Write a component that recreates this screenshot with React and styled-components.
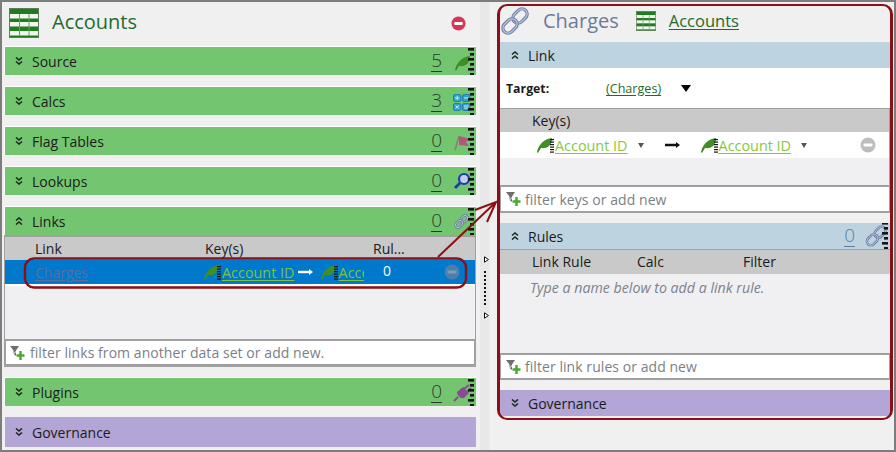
import React from "react";
import styled, { createGlobalStyle } from "styled-components";

const GlobalStyle = createGlobalStyle`
  html, body {
    margin: 0;
    padding: 0;
    width: 896px;
    height: 452px;
    overflow: hidden;
    background: #f0f0f0;
  }
  * {
    box-sizing: border-box;
  }
`;

const Frame = styled.div`
  position: relative;
  width: 896px;
  height: 452px;
  display: flex;
  background: #f0f0f0;
  border: 2px solid #7d7d7d;
  font-family: "Open Sans", "Noto Sans", sans-serif;
  font-size: 14px;
  color: #1b1b1b;
  overflow: hidden;
`;

const LeftPane = styled.div`
  width: 474px;
  flex: none;
  padding-left: 2px;
  display: flex;
  flex-direction: column;
`;

const LeftHeader = styled.div`
  height: 44px;
  display: flex;
  align-items: center;
  padding: 0 10px 2px 5px;
`;

const Title = styled.div`
  margin-left: 13px;
  padding-bottom: 4px;
  font-size: 20px;
  color: #1f6b2c;
  flex: 1;
`;

const Band = styled.div`
  height: ${(p) => p.$height || 26}px;
  flex: none;
  margin-bottom: ${(p) => p.$gap ?? 0}px;
  margin-left: ${(p) => (p.$inset ? 1 : 0)}px;
  display: flex;
  align-items: center;
  background: ${(p) => p.$color};
  border-top: ${(p) => (p.$line ? "1px solid #fff" : "none")};
  border-left: ${(p) => (p.$line ? "1px solid #fff" : "none")};
  padding-left: ${(p) => p.$pad || 10}px;
`;

const BandLabel = styled.span`
  margin-left: 9px;
  padding-top: 1px;
  flex: 1;
`;

const Count = styled.span`
  font-size: 19px;
  font-weight: 300;
  line-height: 21px;
  color: ${(p) => p.$color || "#2f3a2f"};
  border-bottom: 1px solid ${(p) => p.$color || "#2f3a2f"};
  margin-right: ${(p) => p.$right ?? 10}px;
`;

const IconSlot = styled.span`
  display: flex;
  flex: none;
  margin-left: ${(p) => p.$left || 0}px;
  margin-right: ${(p) => p.$right || 0}px;
`;

const Table = styled.div`
  height: 132px;
  margin-bottom: 10px;
  display: flex;
  flex-direction: column;
  border: 1px solid #a0a0a0;
  border-top: 2px solid #a0a0a0;
  background: #f0f0f3;
`;

const GridHead = styled.div`
  height: ${(p) => p.$height || 23}px;
  flex: none;
  display: grid;
  grid-template-columns: ${(p) => p.$cols};
  align-items: center;
  background: #c9c9c9;
  border-top: ${(p) => (p.$line ? "1px solid #a0a0a0" : "none")};
  padding-bottom: ${(p) => (p.$line ? 2 : 0)}px;
`;

const HeadCell = styled.span`
  padding-left: ${(p) => p.$pad || 0}px;
`;

const SelectedRow = styled.div`
  height: 26px;
  flex: none;
  display: grid;
  grid-template-columns: 199px 169px 62px 1fr;
  align-items: center;
  background: #0078cc;
  border-bottom: 2px solid #fff;
`;

const RowLink = styled.span`
  padding: 1px 0 0 30px;
  color: #5f6c9e;
  text-decoration: underline;
  text-underline-offset: 2px;
`;

const KeyCell = styled.span`
  width: 160px;
  display: flex;
  align-items: center;
  overflow: hidden;
  white-space: nowrap;

  svg {
    flex: none;
  }
`;

const FieldLink = styled.span`
  flex: none;
  font-size: 14.4px;
  color: ${(p) => p.$color || "#86c83f"};
  text-decoration: underline;
  text-underline-offset: 2px;
  margin-left: 1px;
`;

const Spacer = styled.div`
  flex: 1;
`;

const Gap = styled.span`
  flex: none;
  display: block;
  width: ${(p) => p.$w || 0}px;
  height: ${(p) => p.$h || 0}px;
`;

const RuleCount = styled.span`
  color: #fff;
  padding-left: 10px;
  margin-top: -3px;
`;

const FilterBox = styled.div`
  height: ${(p) => p.$height || 27}px;
  flex: none;
  display: flex;
  align-items: center;
  gap: ${(p) => p.$gap || 5}px;
  padding-left: ${(p) => p.$pad || 4}px;
  background: #fff;
  border: 1px solid #a0a0a0;
  border-top-width: 2px;
  border-bottom-width: 2px;
  color: #7b7f85;
  letter-spacing: 0.06px;
`;

const Splitter = styled.div`
  width: 21px;
  flex: none;
  display: flex;
  justify-content: flex-end;
  background: linear-gradient(90deg, #f0f0f0 0 4px, #e8e8e8 4px 13px, #f0f0f0 14px);
`;

const Handle = styled.div`
  width: 5px;
  height: 63px;
  margin: 254px 8px 0 0;
  display: flex;
  flex-direction: column;
  align-items: flex-start;
  justify-content: space-between;
`;

const Dots = styled.div`
  width: 2px;
  height: 34px;
  background: repeating-linear-gradient(#111 0 2px, transparent 2px 4px);
`;

const RightPane = styled.div`
  width: 396px;
  height: 416px;
  flex: none;
  margin-top: 2px;
  display: flex;
  flex-direction: column;
  border: 3px solid #8b0f16;
  border-top-width: 2px;
  border-bottom-width: 2px;
  border-radius: 10px;
  overflow: hidden;
`;

const RightHeader = styled.div`
  height: 36px;
  flex: none;
  display: flex;
  align-items: center;
  padding-bottom: 7px;
`;

const RightTitle = styled.span`
  font-size: 20px;
  color: #6c7a9c;
  margin: 0 17px 0 13px;
`;

const RightLink = styled.span`
  font-size: 16.5px;
  color: #1f6b2c;
  text-decoration: underline;
  text-underline-offset: 2px;
  margin-left: 13px;
`;

const WhiteBody = styled.div`
  background: #fff;
  height: 117px;
  flex: none;
  display: flex;
  flex-direction: column;
`;

const TargetRow = styled.div`
  height: 40px;
  flex: none;
  display: flex;
  align-items: center;
  font-size: 12.3px;
  padding-left: 6px;
`;

const TargetLabel = styled.b`
  width: 100px;
`;

const TargetLink = styled.span`
  font-size: 12.6px;
  color: #1f6b2c;
  text-decoration: underline;
  text-underline-offset: 2px;
`;

const BigCaret = styled.span`
  width: 0;
  height: 0;
  margin-left: 20px;
  border-left: 5px solid transparent;
  border-right: 5px solid transparent;
  border-top: 7px solid #000;
`;

const SubTable = styled.div`
  flex: 1;
  display: flex;
  flex-direction: column;
  background: #f0f0f3;
  border-top: 1px solid #a0a0a0;
  border-right: 1px solid #a0a0a0;
`;

const KeyRow = styled.div`
  height: 26px;
  flex: none;
  display: flex;
  align-items: center;
  padding-left: 37px;
  background: #fff;
`;

const SmallCaret = styled.span`
  width: 0;
  height: 0;
  margin-left: 10px;
  border-left: 3.5px solid transparent;
  border-right: 3.5px solid transparent;
  border-top: 5px solid #555;
`;

const RulesBody = styled.div`
  height: 79px;
  flex: none;
  background: #f0f0f3;
`;

const Hint = styled.div`
  padding: 4px 0 0 30px;
  font-size: 14.2px;
  font-style: italic;
  color: #7d8288;
`;

const Overlay = styled.svg`
  position: absolute;
  left: -2px;
  top: -2px;
  pointer-events: none;
`;

const Chevrons = ({ up }) => (
  <svg width="8" height="8" viewBox="0 0 8 8">
    <path
      d={up ? "M1 3.5l3-2.5 3 2.5M1 7.5l3-2.5 3 2.5" : "M1 .5l3 2.5 3-2.5M1 4.5l3 2.5 3-2.5"}
      fill="none"
      stroke="#1c2b1c"
      strokeWidth="1.6"
    />
  </svg>
);

const TableIcon = ({ size }) => (
  <svg width={size} height={size} viewBox="0 0 30 30">
    <rect x="0.5" y="0.5" width="29" height="29" fill="#1f7d1f" stroke="#5d7b5d" />
    {[6, 14, 23].map((y) => (
      <rect key={y} x="1" y={y} width="28" height="4.5" fill="#f2f6ee" />
    ))}
    <path d="M10.5 6v22M20 6v22" stroke="#6f9a6a" strokeWidth="1" />
  </svg>
);

const Ruler = ({ x = 16 }) => (
  <g fill="#151515">
    {[1, 6, 11, 16, 21, 26].map((y, i) => (
      <rect key={y} x={x + (i % 2 ? 2 : 0)} y={y} width={i % 2 ? 4 : 6} height="2.6" />
    ))}
  </g>
);

const LeafShape = () => (
  <path d="M0 14C2 5 8 1 15 0c0 7-4 11-11 10l-3 5z" fill="#3f8f26" />
);

const LeafField = () => (
  <svg width="17" height="15" viewBox="0 0 17 15">
    <LeafShape />
    <g fill="#151515">
      {[1, 3.5, 6, 8.5, 11, 13.5].map((y) => (
        <rect key={y} x="13" y={y} width="4" height="1.2" />
      ))}
    </g>
  </svg>
);

const ChainShape = ({ width = 3.6 }) => (
  <g fill="none" transform="rotate(-45 16 16)">
    <rect x="15" y="10.5" width="17" height="11" rx="5.5" stroke="#6d7fa8" strokeWidth={width} />
    <rect x="15" y="10.5" width="17" height="11" rx="5.5" stroke="#c3cde0" strokeWidth={width / 3} />
    <rect x="0" y="10.5" width="17" height="11" rx="5.5" stroke="#6d7fa8" strokeWidth={width} />
    <rect x="0" y="10.5" width="17" height="11" rx="5.5" stroke="#c3cde0" strokeWidth={width / 3} />
  </g>
);

const Chain = ({ size }) => (
  <svg width={size} height={size} viewBox="0 0 32 32">
    <ChainShape />
  </svg>
);

const RulerChain = () => (
  <svg width="26" height="26" viewBox="0 0 26 26">
    <g transform="scale(0.72) translate(1 2)">
      <ChainShape />
    </g>
    <g transform="translate(2 -2)">
      <Ruler x={16} />
    </g>
  </svg>
);

const CalcCell = ({ x, y, glyph }) => (
  <g>
    <rect x={x} y={y} width="7.4" height="7" rx="1.6" fill="#2ea6c8" stroke="#1c7fb0" />
    <path d={glyph} transform={`translate(${x} ${y})`} stroke="#cfeaf2" strokeWidth="1" fill="none" />
  </g>
);

const BandIcon = ({ kind }) => (
  <svg width="24" height="28" viewBox="0 0 24 28">
    {kind === "leaf" && (
      <g transform="translate(3 9)">
        <LeafShape />
      </g>
    )}
    {kind === "calc" && (
      <g>
        <CalcCell x={1.5} y={7.5} glyph="M1.5 3.5h4.4M3.7 1.3v4.4" />
        <CalcCell x={10.5} y={7.5} glyph="M1.5 3.5h4.4" />
        <CalcCell x={1.5} y={16.5} glyph="M2 2l3.4 3M5.4 2L2 5" />
        <CalcCell x={10.5} y={16.5} glyph="M1.5 2.5h4.4M1.5 4.5h4.4" />
      </g>
    )}
    {kind === "flag" && (
      <g>
        <path d="M7 9l11 3-4 3 3 4-10-1z" fill="#b3557c" />
        <path d="M7 9L3 23" stroke="#8d7a7a" strokeWidth="1.5" />
      </g>
    )}
    {kind === "search" && (
      <g fill="none" stroke="#1c3fa8">
        <circle cx="12" cy="12" r="5" fill="#c8c8f4" strokeWidth="2.2" />
        <path d="M8 16l-5 5" strokeWidth="3" />
      </g>
    )}
    {kind === "link" && (
      <g transform="translate(2 7) scale(0.47)">
        <ChainShape width={5} />
      </g>
    )}
    {kind === "plug" && (
      <g fill="#8a4a96">
        <path d="M5 14l6-5 6 6-5 5c-3 1-7-2-7-6z" />
        <path d="M6 19l-4 4M12 11l5-4M15 14l4-4" stroke="#8a4a96" strokeWidth="2" />
      </g>
    )}
    <Ruler />
  </svg>
);

const Remove = ({ fill = "#d13a55", dash = "#fff", size = 16 }) => (
  <svg width={size} height={size} viewBox="0 0 16 16">
    <circle cx="8" cy="8" r="7.5" fill={fill} />
    <rect x="3.5" y="6.5" width="9" height="3" rx="1" fill={dash} />
  </svg>
);

const Arrow = ({ color }) => (
  <svg width="15" height="8" viewBox="0 0 15 8">
    <path d="M0 4h12" stroke={color} strokeWidth="2.4" />
    <path d="M11 1l4 3-4 3z" fill={color} />
  </svg>
);

const FilterIcon = () => (
  <svg width="15" height="14" viewBox="0 0 15 14">
    <path d="M0 0h9L6 4.5V10L3.5 8V4.5z" fill="#6e6e6e" />
    <path d="M1 11L10 1" stroke="#fff" strokeWidth="1" />
    <path d="M10.5 5v9M6.5 9.5h8" stroke="#4aa82e" strokeWidth="2.4" />
  </svg>
);

const Triangle = () => (
  <svg width="5" height="7" viewBox="0 0 5 7">
    <path d="M.5.8l4 2.7-4 2.7z" fill="#fff" stroke="#111" />
  </svg>
);

const GREEN = "#73c66f";
const PURPLE = "#b3a5d5";
const BLUE = "#bdd3df";
const RED = "#8b0f16";

const sections = [
  { label: "Source", count: 5, icon: "leaf" },
  { label: "Calcs", count: 3, icon: "calc" },
  { label: "Flag Tables", count: 0, icon: "flag" },
  { label: "Lookups", count: 0, icon: "search" },
];

const Section = ({ label, count, icon, up, gap = 11 }) => (
  <Band $color={GREEN} $line $height={29} $gap={gap}>
    <Chevrons up={up} />
    <BandLabel>{label}</BandLabel>
    <Count>{count}</Count>
    <IconSlot>
      <BandIcon kind={icon} />
    </IconSlot>
  </Band>
);

const App = () => {
  return (
    <Frame>
      <GlobalStyle />
      <LeftPane>
        <LeftHeader>
          <TableIcon size={30} />
          <Title>Accounts</Title>
          <Remove size={15} />
        </LeftHeader>
        {sections.map((s) => (
          <Section key={s.label} {...s} />
        ))}
        <Section label="Links" count={0} icon="link" up gap={0} />
        <Table>
          <GridHead $cols="200px 168px 1fr">
            <HeadCell $pad={30}>Link</HeadCell>
            <HeadCell>Key(s)</HeadCell>
            <HeadCell>Rul...</HeadCell>
          </GridHead>
          <SelectedRow>
            <RowLink>Charges</RowLink>
            <KeyCell>
              <LeafField />
              <FieldLink $color="#7cc43a">Account ID</FieldLink>
              <Gap $w={3} />
              <Arrow color="#fff" />
              <Gap $w={8} />
              <LeafField />
              <FieldLink $color="#7cc43a">Account ID</FieldLink>
            </KeyCell>
            <RuleCount>0</RuleCount>
            <IconSlot $left={9}>
              <Remove fill="#4f7fa8" dash="#7b9dbb" />
            </IconSlot>
          </SelectedRow>
          <Spacer />
          <FilterBox>
            <FilterIcon />
            filter links from another data set or add new.
          </FilterBox>
        </Table>
        <Section label="Plugins" count={0} icon="plug" />
        <Band $color={PURPLE} $height={30} $inset>
          <Chevrons />
          <BandLabel>Governance</BandLabel>
        </Band>
      </LeftPane>
      <Splitter>
        <Handle>
          <Triangle />
          <Dots />
          <Triangle />
        </Handle>
      </Splitter>
      <RightPane>
        <RightHeader>
          <Chain size={30} />
          <RightTitle>Charges</RightTitle>
          <TableIcon size={20} />
          <RightLink>Accounts</RightLink>
        </RightHeader>
        <Band $color={BLUE} $pad={11}>
          <Chevrons up />
          <BandLabel>Link</BandLabel>
        </Band>
        <WhiteBody>
          <TargetRow>
            <TargetLabel>Target:</TargetLabel>
            <TargetLink>(Charges)</TargetLink>
            <BigCaret />
          </TargetRow>
          <SubTable>
            <GridHead $cols="1fr">
              <HeadCell $pad={32}>Key(s)</HeadCell>
            </GridHead>
            <KeyRow>
              <LeafField />
              <FieldLink>Account ID</FieldLink>
              <SmallCaret />
              <Gap $w={21} />
              <Arrow color="#111" />
              <Gap $w={21} />
              <LeafField />
              <FieldLink>Account ID</FieldLink>
              <SmallCaret />
              <Spacer />
              <IconSlot $right={13}>
                <Remove fill="#bdbdbd" />
              </IconSlot>
            </KeyRow>
          </SubTable>
        </WhiteBody>
        <FilterBox $height={28} $pad={5} $gap={4}>
          <FilterIcon />
          filter keys or add new
        </FilterBox>
        <Gap $h={10} />
        <Band $color={BLUE} $pad={11}>
          <Chevrons up />
          <BandLabel>Rules</BandLabel>
          <Count $color="#5c7ea0" $right={9}>0</Count>
          <IconSlot>
            <RulerChain />
          </IconSlot>
        </Band>
        <GridHead $cols="105px 106px 1fr" $height={25} $line>
          <HeadCell $pad={32}>Link Rule</HeadCell>
          <HeadCell $pad={32}>Calc</HeadCell>
          <HeadCell $pad={32}>Filter</HeadCell>
        </GridHead>
        <RulesBody>
          <Hint>Type a name below to add a link rule.</Hint>
        </RulesBody>
        <FilterBox $pad={5} $gap={4}>
          <FilterIcon />
          filter link rules or add new
        </FilterBox>
        <Gap $h={10} />
        <Band $color={PURPLE} $pad={11}>
          <Chevrons />
          <BandLabel>Governance</BandLabel>
        </Band>
      </RightPane>
      <Overlay width="896" height="452" viewBox="0 0 896 452">
        <rect x="25" y="258.5" width="441" height="29" rx="9" fill="none" stroke={RED} strokeWidth="2.4" />
        <path d="M438 257L496 202M475 210l21-8-9 20" fill="none" stroke={RED} strokeWidth="2" />
      </Overlay>
    </Frame>
  );
};

export default App;
